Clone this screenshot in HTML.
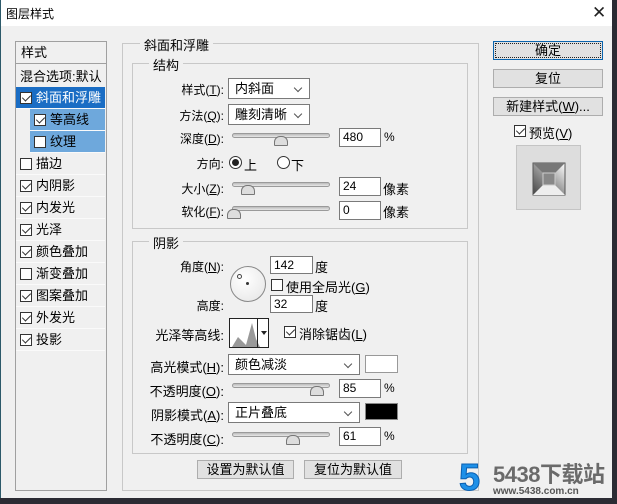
<!DOCTYPE html>
<html><head><meta charset="utf-8"><style>
*{box-sizing:border-box;margin:0;padding:0}
body{width:617px;height:504px;overflow:hidden;background:#2b2b33;font-family:"Liberation Sans","Noto Sans CJK SC",sans-serif;font-size:12px;color:#000;position:relative}
.a{position:absolute}
.win{left:0;top:0;width:612px;height:498px;background:#f0f0f0;border-left:1px solid #2d5a6a}
.title{left:1px;top:0;width:611px;height:26px;background:#fff}
.box{border:1px solid #a0a0a0}
.grp{border:1px solid #c8c8c8}
.lbl{background:#f0f0f0;padding:0 4px;font-size:13px}
.r{text-align:right;white-space:nowrap}
.sel{background:#fff;border:1px solid #7a7a7a;padding-left:6px;line-height:19px;font-size:13px}
.sel:after{content:"";position:absolute;right:8px;top:6px;width:5px;height:5px;border-right:1px solid #555;border-bottom:1px solid #555;transform:rotate(45deg)}
.inp{background:#fff;border:1px solid #7a7a7a;padding-left:3px;line-height:17px;font-size:12px}
.trk{height:5px;border:1px solid #9a9a9a;border-radius:3px;background:linear-gradient(#bbb,#e8e8e8);width:98px}
.th{width:0;height:0}
.th:before{content:"";position:absolute;left:-6px;top:0;width:12px;height:8px;background:#ddd;border:1px solid #777;border-radius:6px 6px 1px 1px}
.cb{width:12px;height:12px;border:1px solid #333;background:#fff}
.cb.k:after{content:"";position:absolute;left:3px;top:0px;width:4px;height:7px;border-right:1.5px solid #333;border-bottom:1.5px solid #333;transform:rotate(45deg)}
.it{left:16px;width:89px;height:22px;line-height:22px;font-size:13px;border-bottom:1px solid #fafafa}
.it .cb{left:4px;top:5px}
.it span{position:absolute;left:20px}
.btn{background:#e1e1e1;border:1px solid #adadad;text-align:center;font-size:13px;line-height:17px}
</style></head><body>
<div class="a win"></div>
<div class="a title"></div>
<div class="a" style="left:6px;top:5px;font-size:12px">图层样式</div>
<div class="a" style="left:592px;top:3px;font-size:17px;color:#222">✕</div>

<div class="a box" style="left:15px;top:41px;width:92px;height:450px;background:#f0f0f0"></div>
<div class="a" style="left:21px;top:42px;font-size:13px">样式</div>
<div class="a" style="left:16px;top:63px;width:90px;height:1px;background:#a0a0a0"></div>
<div class="a" style="left:20px;top:66px;font-size:13px">混合选项:默认</div>
<div class="a it" style="top:87px;background:#1a6dc4;color:#fff"><div class="a cb k"></div><span>斜面和浮雕</span></div>
<div class="a it" style="top:109px;left:30px;width:75px;background:#6ea8dc"><div class="a cb k"></div><span>等高线</span></div>
<div class="a it" style="top:131px;left:30px;width:75px;background:#6ea8dc"><div class="a cb"></div><span>纹理</span></div>
<div class="a it" style="top:153px"><div class="a cb"></div><span>描边</span></div>
<div class="a it" style="top:175px"><div class="a cb k"></div><span>内阴影</span></div>
<div class="a it" style="top:197px"><div class="a cb k"></div><span>内发光</span></div>
<div class="a it" style="top:219px"><div class="a cb k"></div><span>光泽</span></div>
<div class="a it" style="top:241px"><div class="a cb k"></div><span>颜色叠加</span></div>
<div class="a it" style="top:263px"><div class="a cb"></div><span>渐变叠加</span></div>
<div class="a it" style="top:285px"><div class="a cb k"></div><span>图案叠加</span></div>
<div class="a it" style="top:307px"><div class="a cb k"></div><span>外发光</span></div>
<div class="a it" style="top:329px"><div class="a cb k"></div><span>投影</span></div>

<div class="a grp" style="left:122px;top:43px;width:357px;height:448px"></div>
<div class="a lbl" style="left:140px;top:35px">斜面和浮雕</div>
<div class="a grp" style="left:132px;top:63px;width:336px;height:166px"></div>
<div class="a lbl" style="left:149px;top:55px">结构</div>

<div class="a r" style="left:150px;width:74px;top:81px">样式(<u>T</u>):</div>
<div class="a sel" style="left:228px;top:78px;width:82px;height:21px">内斜面</div>
<div class="a r" style="left:150px;width:74px;top:107px">方法(<u>Q</u>):</div>
<div class="a sel" style="left:228px;top:104px;width:82px;height:21px">雕刻清晰</div>
<div class="a r" style="left:150px;width:74px;top:130px">深度(<u>D</u>):</div>
<div class="a trk" style="left:232px;top:133px"></div><div class="a th" style="left:280px;top:136px"></div>
<div class="a inp" style="left:339px;top:128px;width:42px;height:19px">480</div>
<div class="a" style="left:384px;top:130px">%</div>
<div class="a r" style="left:150px;width:74px;top:155px">方向:</div>
<div class="a" style="left:229px;top:156px;width:13px;height:13px;border:1px solid #333;border-radius:50%;background:#fff"></div>
<div class="a" style="left:232px;top:159px;width:7px;height:7px;border-radius:50%;background:#222"></div>
<div class="a" style="left:244px;top:155px;font-size:13px">上</div>
<div class="a" style="left:277px;top:156px;width:13px;height:13px;border:1px solid #333;border-radius:50%;background:#fff"></div>
<div class="a" style="left:291px;top:155px;font-size:13px">下</div>
<div class="a r" style="left:150px;width:74px;top:180px">大小(<u>Z</u>):</div>
<div class="a trk" style="left:232px;top:182px"></div><div class="a th" style="left:247px;top:185px"></div>
<div class="a inp" style="left:339px;top:177px;width:42px;height:19px">24</div>
<div class="a" style="left:383px;top:179px;font-size:13px">像素</div>
<div class="a r" style="left:150px;width:74px;top:203px">软化(<u>F</u>):</div>
<div class="a trk" style="left:232px;top:206px"></div><div class="a th" style="left:233px;top:209px"></div>
<div class="a inp" style="left:339px;top:201px;width:42px;height:19px">0</div>
<div class="a" style="left:383px;top:202px;font-size:13px">像素</div>

<div class="a grp" style="left:132px;top:241px;width:336px;height:213px"></div>
<div class="a lbl" style="left:149px;top:233px">阴影</div>
<div class="a r" style="left:150px;width:74px;top:258px">角度(<u>N</u>):</div>
<div class="a" style="left:230px;top:266px;width:36px;height:36px;border:1px solid #888;border-radius:50%;background:radial-gradient(circle at 40% 35%,#fff,#e4e4e4)"></div>
<div class="a" style="left:237px;top:274px;width:5px;height:5px;border:1px solid #444;border-radius:50%"></div>
<div class="a" style="left:246px;top:282px;width:3px;height:3px;background:#333;border-radius:50%"></div>
<div class="a inp" style="left:270px;top:256px;width:43px;height:18px">142</div>
<div class="a" style="left:315px;top:257px;font-size:13px">度</div>
<div class="a cb" style="left:271px;top:279px"></div>
<div class="a" style="left:286px;top:277px;font-size:13px">使用全局光(<u>G</u>)</div>
<div class="a r" style="left:150px;width:74px;top:297px">高度:</div>
<div class="a inp" style="left:270px;top:295px;width:43px;height:18px">32</div>
<div class="a" style="left:315px;top:296px;font-size:13px">度</div>
<div class="a r" style="left:140px;width:84px;top:325px;font-size:13px">光泽等高线:</div>
<div class="a" style="left:229px;top:318px;width:40px;height:30px;border:1px solid #222;background:#fff;overflow:hidden">
<svg width="40" height="30" style="position:absolute;left:0;top:0"><path d="M2 28 L8 18 L12 22 L16 26 L22 4 L26 20 L30 28 Z" fill="#999"/></svg>
<div class="a" style="left:27px;top:0;width:1px;height:30px;background:#222"></div>
<div class="a" style="left:31px;top:12px;border:3px solid transparent;border-top:4px solid #222"></div>
</div>
<div class="a cb k" style="left:284px;top:326px"></div>
<div class="a" style="left:299px;top:324px;font-size:13px">消除锯齿(<u>L</u>)</div>
<div class="a r" style="left:140px;width:84px;top:357px;font-size:13px">高光模式(<u>H</u>):</div>
<div class="a sel" style="left:228px;top:354px;width:132px;height:21px">颜色减淡</div>
<div class="a" style="left:365px;top:355px;width:33px;height:18px;border:1px solid #999;background:#fff"></div>
<div class="a r" style="left:140px;width:84px;top:381px;font-size:13px">不透明度(<u>O</u>):</div>
<div class="a trk" style="left:232px;top:383px"></div><div class="a th" style="left:316px;top:386px"></div>
<div class="a inp" style="left:339px;top:379px;width:42px;height:19px">85</div>
<div class="a" style="left:384px;top:381px">%</div>
<div class="a r" style="left:140px;width:84px;top:405px;font-size:13px">阴影模式(<u>A</u>):</div>
<div class="a sel" style="left:228px;top:402px;width:132px;height:21px">正片叠底</div>
<div class="a" style="left:365px;top:403px;width:33px;height:17px;border:1px solid #888;background:#000"></div>
<div class="a r" style="left:140px;width:84px;top:429px;font-size:13px">不透明度(<u>C</u>):</div>
<div class="a trk" style="left:232px;top:432px"></div><div class="a th" style="left:292px;top:435px"></div>
<div class="a inp" style="left:339px;top:427px;width:42px;height:19px">61</div>
<div class="a" style="left:384px;top:429px">%</div>

<div class="a btn" style="left:197px;top:460px;width:97px;height:19px">设置为默认值</div>
<div class="a btn" style="left:304px;top:460px;width:98px;height:19px">复位为默认值</div>

<div class="a btn" style="left:493px;top:41px;width:110px;height:19px;border:1px solid #0a64ad;outline:1px dotted #222;outline-offset:-3px">确定</div>
<div class="a btn" style="left:493px;top:69px;width:110px;height:19px">复位</div>
<div class="a btn" style="left:493px;top:97px;width:110px;height:19px">新建样式(<u>W</u>)...</div>
<div class="a cb k" style="left:514px;top:125px"></div>
<div class="a" style="left:529px;top:123px;font-size:13px">预览(<u>V</u>)</div>
<div class="a" style="left:516px;top:145px;width:65px;height:65px;background:#ddd;border:1px solid #c4c4c4">
<svg width="65" height="65"><defs><linearGradient id="g" x1="0" y1="1" x2="1" y2="0"><stop offset="0" stop-color="#444"/><stop offset="0.5" stop-color="#999"/><stop offset="1" stop-color="#fff"/></linearGradient></defs>
<rect x="16" y="17" width="32" height="32" fill="url(#g)" stroke="#555"/><polygon points="16,17 48,17 38,27 26,27" fill="#777"/><polygon points="48,49 16,49 26,39 38,39" fill="#eee"/><rect x="26" y="27" width="12" height="12" fill="#888" stroke="#ccc"/></svg></div>

<div class="a" style="left:459px;top:458px;font-size:38px;line-height:40px;font-weight:bold;color:#1e90e8;-webkit-text-stroke:1px #0b5fb0">5</div>
<div class="a" style="left:493px;top:463px;font-size:22px;line-height:24px;font-weight:bold;color:#6a6a6a;letter-spacing:-0.5px">5438下载站</div>
<div class="a" style="left:493px;top:486px;font-size:10px;line-height:11px;font-weight:bold;color:#555">www.5438.com.cn</div>
</body></html>
